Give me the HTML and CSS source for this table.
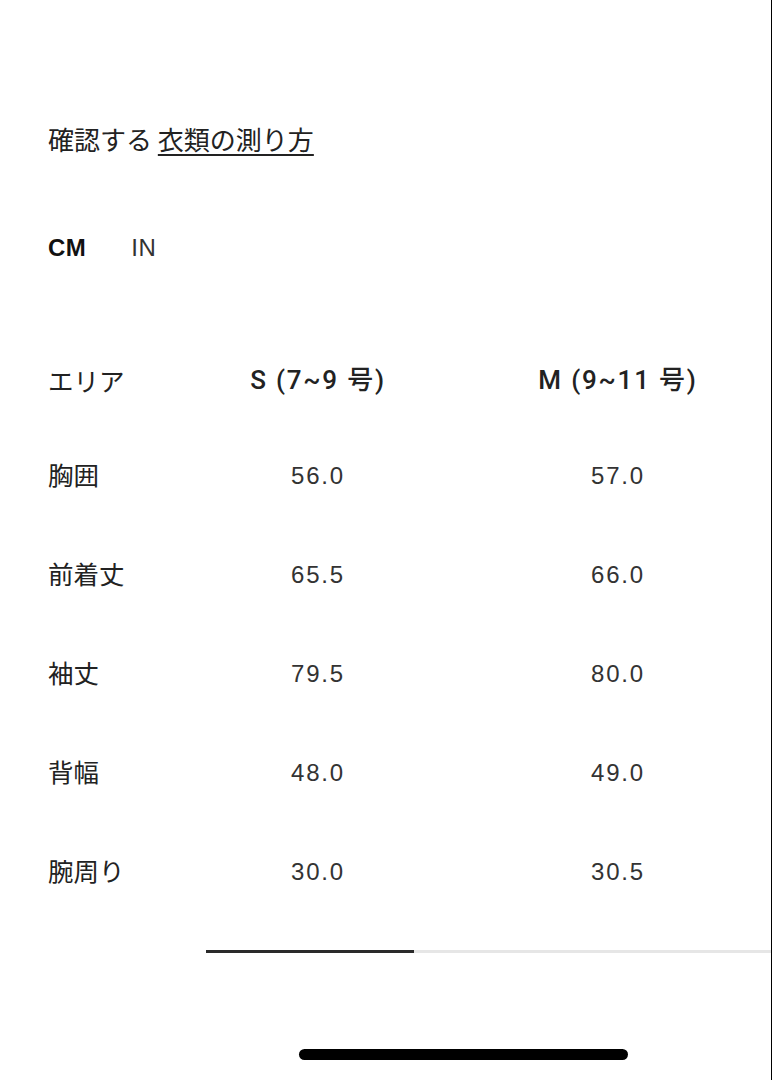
FILE: index.html
```html
<!DOCTYPE html>
<html lang="ja">
<head>
<meta charset="utf-8">
<title>サイズガイド</title>
<link rel="stylesheet" href="styles.css">
</head>
<body>
<div class="page">
  <p class="title">確認する <a class="link" href="#">衣類の測り方</a></p>
  <div class="units">
    <span class="unit active">CM</span>
    <span class="unit">IN</span>
  </div>
  <div class="table">
    <div class="row head">
      <div class="cell label">エリア</div>
      <div class="cell size">S (7~9 号)</div>
      <div class="cell size">M (9~11 号)</div>
    </div>
    <div class="row">
      <div class="cell label">胸囲</div>
      <div class="cell num">56.0</div>
      <div class="cell num">57.0</div>
    </div>
    <div class="row">
      <div class="cell label">前着丈</div>
      <div class="cell num">65.5</div>
      <div class="cell num">66.0</div>
    </div>
    <div class="row">
      <div class="cell label">袖丈</div>
      <div class="cell num">79.5</div>
      <div class="cell num">80.0</div>
    </div>
    <div class="row">
      <div class="cell label">背幅</div>
      <div class="cell num">48.0</div>
      <div class="cell num">49.0</div>
    </div>
    <div class="row">
      <div class="cell label">腕周り</div>
      <div class="cell num">30.0</div>
      <div class="cell num">30.5</div>
    </div>
  </div>
  <div class="scroll">
    <div class="thumb"></div>
  </div>
  <div class="home"></div>
</div>
</body>
</html>
```

FILE: styles.css
```css
html, body {
  margin: 0;
  padding: 0;
  background: #fff;
}
.page {
  position: relative;
  box-sizing: border-box;
  width: 772px;
  height: 1080px;
  overflow: hidden;
  padding: 119px 0 0 48px;
  border-right: 1px solid #000;
  font-family: "Liberation Sans", "Noto Sans CJK JP", sans-serif;
  color: #222;
}
.title {
  margin: 0;
  height: 40px;
  line-height: 40px;
  font-family: "Noto Sans CJK JP", sans-serif;
  font-size: 26px;
  font-weight: 400;
  color: #222;
}
.link {
  color: #222;
  text-decoration: underline;
  text-decoration-thickness: 2px;
  text-underline-offset: 4px;
}
.units {
  display: flex;
  gap: 45px;
  margin-top: 69px;
  height: 40px;
  line-height: 40px;
  font-size: 24px;
}
.unit {
  color: #333;
  letter-spacing: 0.5px;
}
.unit.active {
  font-weight: 700;
  color: #111;
  letter-spacing: 0.5px;
}
.table {
  margin-top: 66px;
}
.row {
  display: grid;
  grid-template-columns: 120px 300px 300px;
  height: 99px;
  align-items: center;
}
.row.head {
  height: 92px;
}
.cell {
  line-height: 30px;
}
.label {
  font-family: "Noto Sans CJK JP", sans-serif;
  font-size: 25.5px;
  color: #222;
}
.row:not(.head) .label {
  margin-top: -3px;
}
.size {
  text-align: center;
  font-family: "Roboto", "Noto Sans CJK JP", sans-serif;
  font-weight: 500;
  font-size: 26px;
  color: #222;
  letter-spacing: 1.8px;
}
.num {
  text-align: center;
  font-size: 24px;
  color: #333;
  letter-spacing: 1.8px;
}
.scroll {
  margin: 29px 0 0 158px;
  height: 3px;
  background: #e6e6e6;
}
.thumb {
  width: 208px;
  height: 3px;
  background: #2a2a2a;
}
.home {
  position: absolute;
  left: 299px;
  top: 1049px;
  width: 329px;
  height: 11px;
  border-radius: 6px;
  background: #000;
}
```
